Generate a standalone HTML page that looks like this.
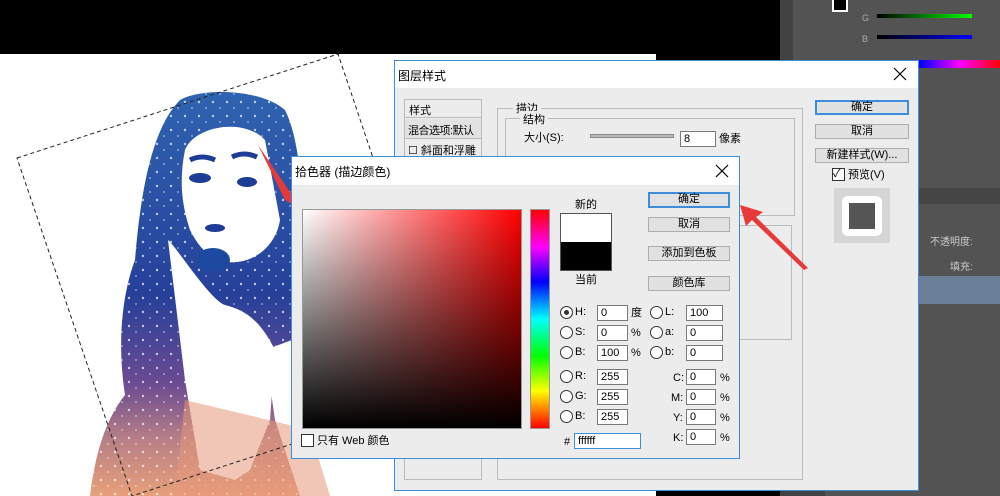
<!DOCTYPE html>
<html><head><meta charset="utf-8"><style>
*{margin:0;padding:0;box-sizing:border-box}
body{width:1000px;height:496px;overflow:hidden;background:#000;position:relative;font-family:"Liberation Sans","Noto Sans CJK SC",sans-serif;font-size:11px;color:#000}
.a{position:absolute}
.btn{position:absolute;background:#e1e1e1;border:1px solid #adadad;text-align:center;font-size:11px;line-height:13px;height:15px}
.btn.d{border:2px solid #3c8ddb;line-height:11px}
.in{position:absolute;background:#fff;border:1px solid #7a7a7a;font-size:11px;line-height:14px;padding-left:3px;height:16px}
.rad{position:absolute;width:13px;height:13px;border:1px solid #333;border-radius:50%;background:#fff}
.lb{position:absolute;font-size:11px;line-height:14px;white-space:nowrap}
.x{position:absolute;width:14px;height:14px}
</style></head><body>
<div class="a" style="left:0;top:54px;width:656px;height:442px;background:#fff"></div>
<svg class="a" style="left:0;top:0" width="656" height="496">
<defs><linearGradient id="g1" x1="0" y1="0" x2="0" y2="1"><stop offset="0" stop-color="#2f63b0"/><stop offset="0.5" stop-color="#26409a"/><stop offset="0.72" stop-color="#6a4a92"/><stop offset="0.86" stop-color="#b77f86"/><stop offset="1" stop-color="#e8a07a"/></linearGradient>
<pattern id="sp" width="14" height="14" patternUnits="userSpaceOnUse"><circle cx="3" cy="4" r="1.2" fill="#fff" opacity=".7"/><circle cx="10" cy="10" r="0.9" fill="#fff" opacity=".6"/></pattern></defs>
<path d="M180 100 C200 88 260 88 285 110 C300 140 305 200 300 260 L292 340 L265 350 L275 420 L300 496 L90 496 C95 455 105 420 125 395 C118 350 120 300 135 260 C140 200 150 130 180 100Z" fill="url(#g1)"/>
<path d="M180 100 C200 88 260 88 285 110 C300 140 305 200 300 260 L292 340 L265 350 L275 420 L300 496 L90 496 C95 455 105 420 125 395 C118 350 120 300 135 260 C140 200 150 130 180 100Z" fill="url(#sp)"/>
<path d="M185 150 C195 125 245 118 265 140 L280 220 C275 250 250 262 235 262 C215 265 200 250 190 230 C180 200 180 175 185 150Z" fill="#fff"/>
<path d="M168 240 C175 245 210 300 225 305 C245 310 260 320 275 350 L270 420 L250 470 L235 480 L200 470 L185 380 Z" fill="#fff"/>
<path d="M185 400 L310 430 L330 496 L175 496Z" fill="#e6977a" opacity=".55"/>
<path d="M190 160 q12 -6 25 0 M232 157 q12 -6 25 0" stroke="#1d3d96" stroke-width="5" fill="none"/>
<ellipse cx="200" cy="178" rx="11" ry="5" fill="#1d3d96"/><ellipse cx="247" cy="182" rx="10" ry="5" fill="#1d3d96"/>
<ellipse cx="215" cy="228" rx="10" ry="4" fill="#1d3d96"/>
<ellipse cx="213" cy="260" rx="17" ry="12" fill="#1d4aa0"/>
<polygon points="17,158 338,54 452,392 132,496" fill="none" stroke="#222" stroke-dasharray="4,3"/>
<polygon points="258,145 292,195 305,212 285,200" fill="#e8393a"/>
</svg>
<!-- right PS panel -->
<div class="a" style="left:780px;top:0;width:220px;height:496px;background:#424242"></div>
<div class="a" style="left:793px;top:0;width:32px;height:60px;background:#535353"></div>
<div class="a" style="left:825px;top:0;width:175px;height:496px;background:#535353"></div>
<div class="a" style="left:877px;top:14px;width:95px;height:4px;background:linear-gradient(90deg,#000,#0f0)"></div>
<div class="a" style="left:877px;top:35px;width:95px;height:4px;background:linear-gradient(90deg,#000,#00f)"></div>
<div class="a" style="left:862px;top:34px;font-size:9px;color:#aaa">B</div>
<div class="a" style="left:862px;top:13px;font-size:9px;color:#aaa">G</div>
<div class="a" style="left:832px;top:0;width:16px;height:12px;border:2px solid #fff;border-top:none;background:#000"></div>
<div class="a" style="left:840px;top:60px;width:160px;height:8px;background:linear-gradient(90deg,#e8c8a0,#0ff,#00f,#f0f,#f00)"></div>
<div class="a" style="left:918px;top:188px;width:82px;height:16px;background:#454545"></div>
<div class="a" style="left:918px;top:276px;width:82px;height:28px;background:#6b7f99"></div>
<div class="a" style="left:930px;top:233px;font-size:10px;color:#ccc">不透明度:</div>
<div class="a" style="left:950px;top:258px;font-size:10px;color:#ccc">填充:</div>
<!-- layer style dialog -->
<div class="a" style="left:394px;top:60px;width:525px;height:431px;background:#ececec;border:1px solid #3c8ddb"></div>
<div class="a" style="left:395px;top:61px;width:523px;height:27px;background:#fff"></div>
<div class="a" style="left:398px;top:67px;font-size:12px">图层样式</div>
<svg class="x" style="left:893px;top:67px"><path d="M1 1L13 13M13 1L1 13" stroke="#000" stroke-width="1.2"/></svg>
<div class="a" style="left:404px;top:99px;width:78px;height:381px;border:1px solid #bbb;background:#ececec"></div>
<div class="a" style="left:405px;top:100px;width:76px;height:18px;border-bottom:1px solid #bbb;font-size:11px;padding:2px 4px">样式</div>
<div class="a" style="left:405px;top:119px;width:76px;height:20px;border-bottom:1px solid #bbb;font-size:11px;padding:3px 3px;background:#e2e2e2;white-space:nowrap;overflow:hidden;letter-spacing:-0.5px">混合选项:默认</div>
<div class="a" style="left:408px;top:142px;font-size:11px;white-space:nowrap">☐ 斜面和浮雕</div>
<div class="a" style="left:497px;top:108px;width:306px;height:372px;border:1px solid #bbb"></div>
<div class="a" style="left:513px;top:100px;background:#ececec;padding:0 3px;font-size:11px">描边</div>
<div class="a" style="left:505px;top:118px;width:290px;height:98px;border:1px solid #bbb"></div>
<div class="a" style="left:520px;top:111px;background:#ececec;padding:0 3px;font-size:11px">结构</div>
<div class="a" style="left:524px;top:225px;width:268px;height:115px;border:1px solid #bbb"></div>
<div class="lb" style="left:524px;top:131px">大小(S):</div>
<div class="a" style="left:590px;top:134px;width:84px;height:4px;background:#bbb;border:1px solid #888"></div>
<div class="in" style="left:680px;top:131px;width:36px">8</div>
<div class="lb" style="left:719px;top:132px">像素</div>
<div class="btn d" style="left:815px;top:100px;width:94px">确定</div>
<div class="btn" style="left:815px;top:124px;width:94px">取消</div>
<div class="btn" style="left:815px;top:148px;width:94px">新建样式(W)...</div>
<div class="a" style="left:832px;top:168px;width:13px;height:13px;border:1px solid #333;background:#fff;font-size:11px;line-height:11px">✓</div>
<div class="lb" style="left:848px;top:168px">预览(V)</div>
<div class="a" style="left:834px;top:188px;width:56px;height:55px;background:#d6d6d6"></div>
<div class="a" style="left:842px;top:196px;width:40px;height:40px;background:#fff;border-radius:6px"></div>
<div class="a" style="left:849px;top:203px;width:26px;height:26px;background:#555"></div>
<svg class="a" style="left:738px;top:200px" width="80" height="75"><polygon points="2,5 25,12 18,17 70,68 66,70 14,20 8,26" fill="#e8393a"/></svg>
<!-- color picker -->
<div class="a" style="left:291px;top:156px;width:449px;height:303px;background:#ececec;border:1px solid #3c8ddb"></div>
<div class="a" style="left:292px;top:157px;width:447px;height:28px;background:#fff"></div>
<div class="a" style="left:295px;top:163px;font-size:12px">拾色器 (描边颜色)</div>
<svg class="x" style="left:715px;top:164px"><path d="M1 1L13 13M13 1L1 13" stroke="#000" stroke-width="1.2"/></svg>
<div class="a" style="left:302px;top:209px;width:220px;height:220px;border:1px solid #999;background:linear-gradient(to bottom,rgba(0,0,0,0),#000),linear-gradient(to right,#fff,#f00)"></div>
<div class="a" style="left:530px;top:209px;width:20px;height:220px;border:1px solid #999;background:linear-gradient(to bottom,#f00,#f0f 17%,#00f 33%,#0ff 50%,#0f0 67%,#ff0 83%,#f00)"></div>
<div class="lb" style="left:575px;top:198px">新的</div>
<div class="a" style="left:560px;top:213px;width:52px;height:58px;border:1px solid #555;background:linear-gradient(#fff 50%,#000 50%)"></div>
<div class="lb" style="left:575px;top:273px">当前</div>
<div class="btn d" style="left:648px;top:192px;width:82px;height:16px">确定</div>
<div class="btn" style="left:648px;top:217px;width:82px">取消</div>
<div class="btn" style="left:648px;top:246px;width:82px">添加到色板</div>
<div class="btn" style="left:648px;top:276px;width:82px">颜色库</div>
<div class="rad" style="left:560px;top:306px;box-shadow:inset 0 0 0 3px #fff;background:#333"></div><div class="lb" style="left:575px;top:305px">H:</div><div class="in" style="left:597px;top:305px;width:31px">0</div><div class="lb" style="left:631px;top:306px">度</div>
<div class="rad" style="left:560px;top:326px"></div><div class="lb" style="left:575px;top:325px">S:</div><div class="in" style="left:597px;top:325px;width:31px">0</div><div class="lb" style="left:631px;top:326px">%</div>
<div class="rad" style="left:560px;top:346px"></div><div class="lb" style="left:575px;top:345px">B:</div><div class="in" style="left:597px;top:345px;width:31px">100</div><div class="lb" style="left:631px;top:346px">%</div>
<div class="rad" style="left:650px;top:306px"></div><div class="lb" style="left:665px;top:305px">L:</div><div class="in" style="left:686px;top:305px;width:37px">100</div>
<div class="rad" style="left:650px;top:326px"></div><div class="lb" style="left:665px;top:325px">a:</div><div class="in" style="left:686px;top:325px;width:37px">0</div>
<div class="rad" style="left:650px;top:346px"></div><div class="lb" style="left:665px;top:345px">b:</div><div class="in" style="left:686px;top:345px;width:37px">0</div>
<div class="rad" style="left:560px;top:370px"></div><div class="lb" style="left:575px;top:369px">R:</div><div class="in" style="left:597px;top:369px;width:31px">255</div>
<div class="rad" style="left:560px;top:390px"></div><div class="lb" style="left:575px;top:389px">G:</div><div class="in" style="left:597px;top:389px;width:31px">255</div>
<div class="rad" style="left:560px;top:410px"></div><div class="lb" style="left:575px;top:409px">B:</div><div class="in" style="left:597px;top:409px;width:31px">255</div>
<div class="lb" style="left:673px;top:371px">C:</div><div class="in" style="left:686px;top:369px;width:30px">0</div><div class="lb" style="left:720px;top:371px">%</div>
<div class="lb" style="left:671px;top:391px">M:</div><div class="in" style="left:686px;top:389px;width:30px">0</div><div class="lb" style="left:720px;top:391px">%</div>
<div class="lb" style="left:673px;top:411px">Y:</div><div class="in" style="left:686px;top:409px;width:30px">0</div><div class="lb" style="left:720px;top:411px">%</div>
<div class="lb" style="left:673px;top:431px">K:</div><div class="in" style="left:686px;top:429px;width:30px">0</div><div class="lb" style="left:720px;top:431px">%</div>
<div class="lb" style="left:564px;top:435px">#</div><div class="in" style="left:574px;top:433px;width:67px;border-color:#3c8ddb">ffffff</div>
<div class="a" style="left:301px;top:434px;width:13px;height:13px;border:1px solid #333;background:#fff"></div>
<div class="lb" style="left:317px;top:434px">只有 Web 颜色</div>
</body></html>
